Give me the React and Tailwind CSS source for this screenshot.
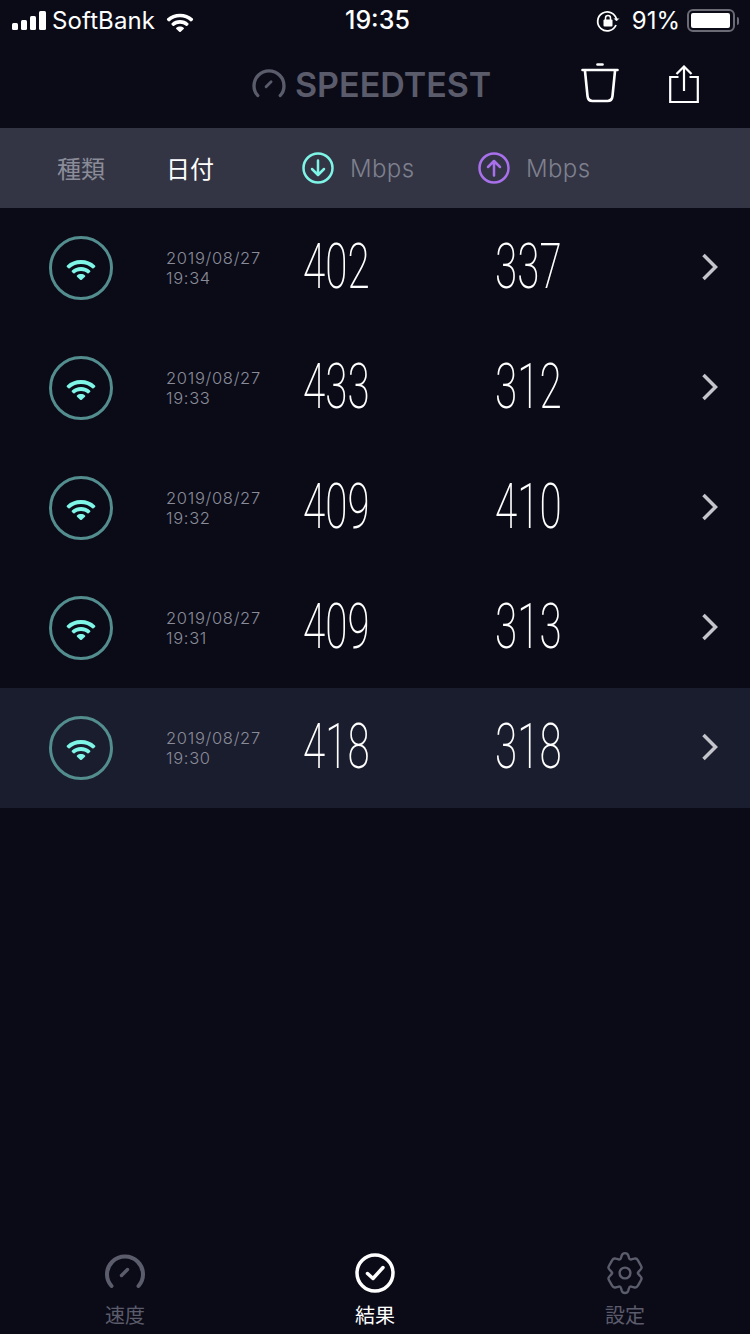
import React from 'react';

const rows = [
  { time: '19:34', down: '402', up: '337' },
  { time: '19:33', down: '433', up: '312' },
  { time: '19:32', down: '409', up: '410' },
  { time: '19:31', down: '409', up: '313' },
  { time: '19:30', down: '418', up: '318', active: true },
];

const cjk = "font-['Noto_Sans_CJK_JP',sans-serif]";

const WifiGlyph = ({ className }) => (
  <svg viewBox="0 0 32 24" className={className} fill="currentColor">
    <path d="M16 4C10.5 4 5.6 6 2 9.4c-.5.5-.5 1.200 0 1.700l1 1c.5.500 1.200.500 1.700.1C7.700 9.500 11.700 8 16 8s8.300 1.500 11.300 4.200c.5.400 1.200.400 1.700-.1l1-1c.5-.5.500-1.200 0-1.700C26.400 6 21.500 4 16 4z" />
    <path d="M16 11c-3.500 0-6.700 1.300-9 3.500-.5.500-.5 1.200 0 1.600l1 1c.5.500 1.100.500 1.600.1 1.700-1.400 4-2.300 6.400-2.300s4.700.9 6.400 2.300c.5.400 1.100.400 1.600-.1l1-1c.5-.4.500-1.100 0-1.600-2.300-2.200-5.500-3.500-9-3.500z" />
    <path d="M16 18c-1.500 0-2.900.5-4 1.400-.4.400-.4.900 0 1.300l3.200 3c.4.400 1.200.400 1.600 0l3.200-3c.4-.4.400-.9 0-1.300-1.100-.9-2.500-1.400-4-1.400z" />
  </svg>
);

const Gauge = ({ className, strokeWidth = 4 }) => (
  <svg viewBox="0 0 40 36" className={className} fill="none" stroke="currentColor" strokeWidth={strokeWidth} strokeLinecap="round">
    <path d="M6.500 33C3.600 29.800 2 26 2 21.500 2 11.500 10 3.500 20 3.500s18 8 18 18c0 4.500-1.600 8.300-4.500 11.500" />
    <path d="M16.500 22.500l6-6" strokeWidth={strokeWidth * 0.85} />
  </svg>
);

const CircleArrow = ({ up, className }) => (
  <svg viewBox="0 0 32 32" className={className} fill="none" stroke="currentColor" strokeLinecap="round" strokeLinejoin="round">
    <circle cx="16" cy="16" r="14.500" strokeWidth="2.500" />
    {up ? (
      <path d="M16 23.500V9.500M10 15l6-6 6 6" strokeWidth="2.500" />
    ) : (
      <path d="M16 8.500v14M10 17l6 6 6-6" strokeWidth="2.500" />
    )}
  </svg>
);

const StatusBar = () => (
  <div className="h-10 pt-[1px] flex items-center justify-between text-white font-['Inter',sans-serif] text-[24px] relative">
    <div className="flex items-center pl-3">
      <div className="flex items-end gap-[3px] h-[19px]">
        <div className="w-[6px] h-[7px] bg-white rounded-[1.500px]" />
        <div className="w-[6px] h-[10px] bg-white rounded-[1.500px]" />
        <div className="w-[6px] h-[14px] bg-white rounded-[1.500px]" />
        <div className="w-[7px] h-[19px] bg-white rounded-[1.500px]" />
      </div>
      <span className="ml-[6px] tracking-[0.1px]">SoftBank</span>
      <WifiGlyph className="w-[30px] h-[22px] ml-[10px]" />
    </div>
    <span className="absolute left-[345px] text-[25px] font-medium">19:35</span>
    <div className="flex items-center pr-[11px]">
      <svg viewBox="0 0 24 24" className="w-[24px] h-[24px] mr-[12px]" fill="none" stroke="currentColor" strokeWidth="1.800">
        <path d="M20.500 10.500A9.500 9.500 0 1 0 20 16" />
        <path d="M23 9.500l-2.500 2.500-2.500-2.500" fill="currentColor" strokeWidth="0.500" />
        <rect x="7.500" y="10.500" width="9" height="7" rx="1" fill="currentColor" strokeWidth="0" />
        <path d="M9.500 11V9a2.500 2.500 0 0 1 5 0v2" strokeWidth="1.500" />
      </svg>
      <span>91%</span>
      <div className="ml-[7px] w-[48px] h-[23px] rounded-[6px] border-2 border-[#6a6b75] p-[2px]">
        <div className="h-full w-[39px] bg-white rounded-[2px]" />
      </div>
      <div className="ml-[2px] w-[2px] h-[8px] bg-[#6a6b75] rounded-r-sm" />
    </div>
  </div>
);

const AppHeader = () => (
  <div className="h-[88px] flex items-center relative">
    <div className="ml-[252px] flex items-center text-[#5b5c6b] pt-[2px]">
      <Gauge className="w-[34px] h-[30px] -mt-[4px]" strokeWidth={4} />
      <span className="ml-[9px] text-[34px] leading-none font-semibold tracking-[0px] font-['Inter',sans-serif]">SPEEDTEST</span>
    </div>
    <svg viewBox="0 0 38 40" className="absolute left-[581px] top-[22px] w-[38px] h-[42px] text-white" fill="none" stroke="currentColor" strokeWidth="2.600" strokeLinecap="round" strokeLinejoin="round">
      <path d="M1.500 7h35" />
      <path d="M16.500 1.500h5" />
      <path d="M4 8l2.500 25c.3 3 2 5 5 5h15c3 0 4.700-2 5-5L34 8" />
    </svg>
    <svg viewBox="0 0 30 38" className="absolute left-[669px] top-[25px] w-[30px] h-[38px] text-white" fill="none" stroke="currentColor" strokeWidth="2.200">
      <path d="M9.500 12H1.200v25h27.600V12h-8.300" />
      <path d="M15 26V2M7.500 9L15 1.500 22.500 9" />
    </svg>
  </div>
);

const TableHeader = () => (
  <div className={`h-20 bg-[#333544] flex items-center text-[24px] ${cjk}`}>
    <span className="ml-[57px] w-[110px] text-[#8b8c99]">種類</span>
    <span className="-ml-[1px] w-[136px] text-white">日付</span>
    <CircleArrow className="w-8 h-8 text-[#7ff5e8]" />
    <span className="ml-[16px] w-[128px] pt-[2px] text-[#7f808e] font-['Inter',sans-serif] font-light text-[24px] tracking-[0.4px]">Mbps</span>
    <CircleArrow up className="w-8 h-8 text-[#a970ec]" />
    <span className="ml-[16px] pt-[2px] text-[#7f808e] font-['Inter',sans-serif] font-light text-[24px] tracking-[0.4px]">Mbps</span>
  </div>
);

const Speed = ({ value, className }) => (
  <div className={className}>
    <span className="inline-block -mt-1 -ml-[1px] origin-left scale-x-[0.64] font-['Roboto',sans-serif] font-[200] text-[63px] leading-none text-white">
      {value}
    </span>
  </div>
);

const ResultRow = ({ time, down, up, active }) => (
  <div className={`h-[120px] flex items-center ${active ? 'bg-[#1a1d2e]' : ''}`}>
    <div className="ml-[49px] w-16 h-16 rounded-full border-[3px] border-[#538d8e] flex items-center justify-center">
      <WifiGlyph className="w-[32px] h-[24px] text-[#7ff5e8]" />
    </div>
    <div className="ml-[53px] w-[138px] text-[#8a8b98] font-['Inter',sans-serif] font-light text-[16.500px] tracking-[0.7px] leading-5">
      <div>2019/08/27</div>
      <div>{time}</div>
    </div>
    <Speed value={down} className="w-[192px]" />
    <Speed value={up} className="w-[205px]" />
    <svg viewBox="0 0 18 28" className="-mt-[2px] w-[18px] h-[28px] text-[#c4c5cb]" fill="none" stroke="currentColor" strokeWidth="3.500">
      <path d="M2.500 2l12 12-12 12" />
    </svg>
  </div>
);

const Tab = ({ label, active, children }) => (
  <div className="flex-1 flex flex-col items-center">
    <div className="h-10 flex items-center justify-center">{children}</div>
    <span className={`mt-[8px] text-[20px] leading-7 ${cjk} ${active ? 'text-white' : 'text-[#5b5c6b]'}`}>{label}</span>
  </div>
);

const TabBar = () => (
  <div className="mt-auto h-[94px] pt-[13px] flex">
    <Tab label="速度">
      <Gauge className="w-10 h-9 -mt-[4px] text-[#5b5c6c]" strokeWidth={4} />
    </Tab>
    <Tab label="結果" active>
      <svg viewBox="0 0 40 40" className="w-10 h-10 text-white" fill="none" stroke="currentColor" strokeWidth="3.500" strokeLinecap="round" strokeLinejoin="round">
        <circle cx="20" cy="20" r="18" />
        <path d="M12.500 20.500l5.500 5 10-11" />
      </svg>
    </Tab>
    <Tab label="設定">
      <svg viewBox="0 0 24 24" className="w-[52px] h-[52px] text-[#5b5c6c]" fill="none" stroke="currentColor" strokeWidth="1.100" strokeLinejoin="round">
        <path d="M12 2.800c.7 0 1.300.5 1.500 1.100l.4 1.300c.1.400.6.700 1 .5l1.300-.3c.7-.2 1.400.1 1.700.7l1.500 2.600c.4.600.2 1.300-.3 1.800l-.9 1c-.3.300-.3.700 0 1l.9 1c.5.500.7 1.200.3 1.800l-1.500 2.600c-.3.600-1 .9-1.700.7l-1.300-.3c-.4-.2-.9.100-1 .5l-.4 1.300c-.2.600-.8 1.100-1.500 1.100s-1.300-.5-1.500-1.100l-.4-1.300c-.1-.4-.6-.7-1-.5l-1.300.3c-.7.200-1.400-.1-1.700-.7l-1.500-2.600c-.4-.6-.2-1.300.3-1.800l.9-1c.3-.3.300-.7 0-1l-.9-1c-.5-.5-.7-1.200-.3-1.800l1.500-2.600c.3-.6 1-.9 1.700-.7l1.300.3c.4.200.9-.1 1-.5l.4-1.300c.2-.6.800-1.100 1.500-1.100z" />
        <circle cx="12" cy="12" r="2.500" />
      </svg>
    </Tab>
  </div>
);

const App = () => {
  return (
    <div className="h-[1334px] w-[750px] overflow-hidden bg-[#0b0b18] flex flex-col">
      <StatusBar />
      <AppHeader />
      <TableHeader />
      {rows.map((row) => (
        <ResultRow key={row.time} {...row} />
      ))}
      <TabBar />
    </div>
  );
};

export default App;
